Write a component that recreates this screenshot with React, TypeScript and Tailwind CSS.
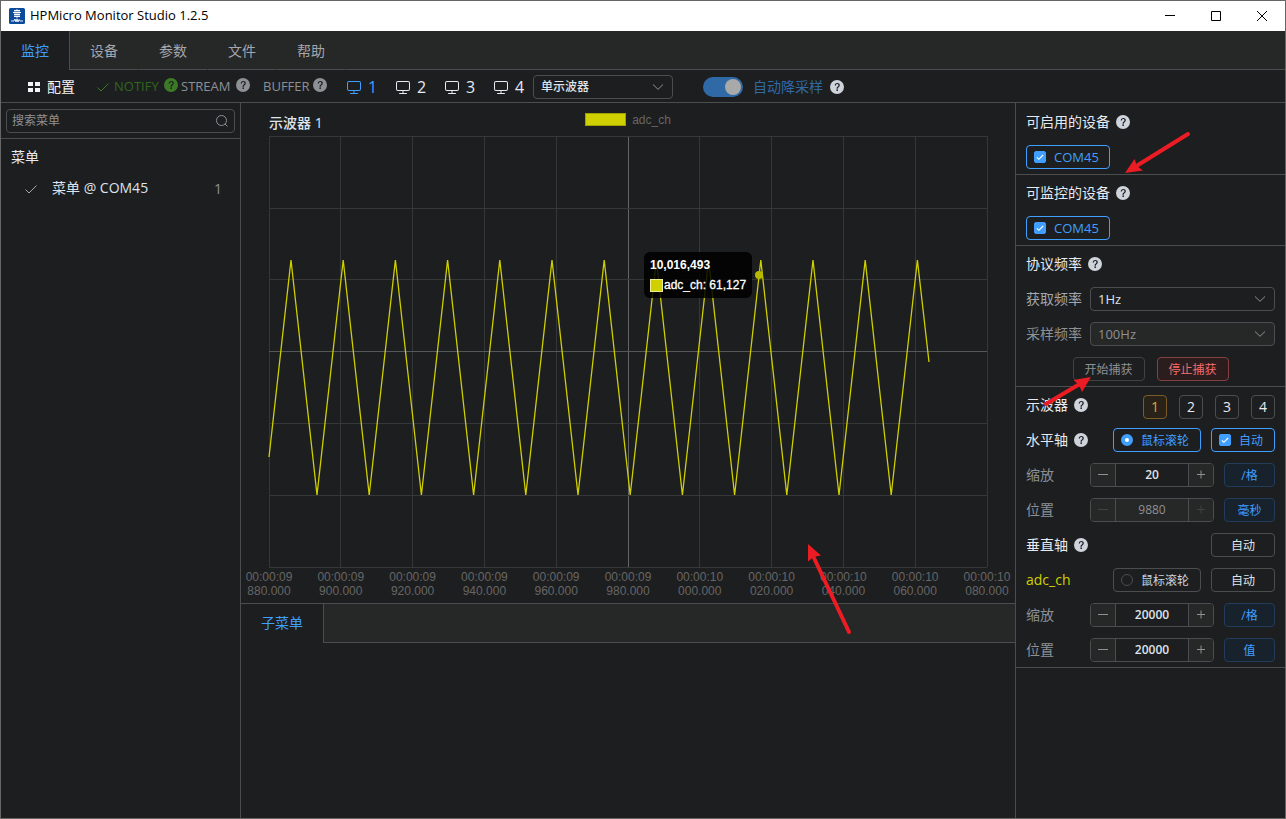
import { useState } from 'react';
import type { ReactNode } from 'react';
import clsx from 'clsx';

const TABS = ['监控', '设备', '参数', '文件', '帮助'];
const SCOPES = [1, 2, 3, 4];

const TICKS = [
  ['00:00:09', '880.000'],
  ['00:00:09', '900.000'],
  ['00:00:09', '920.000'],
  ['00:00:09', '940.000'],
  ['00:00:09', '960.000'],
  ['00:00:09', '980.000'],
  ['00:00:10', '000.000'],
  ['00:00:10', '020.000'],
  ['00:00:10', '040.000'],
  ['00:00:10', '060.000'],
  ['00:00:10', '080.000'],
];

// Triangle wave in plot units (718 x 431)
const WAVE = [
  '0,321',
  ...Array.from({ length: 12 }, (_, i) => `${22 + i * 52.2},124 ${48 + i * 52.2},359`),
  '648.4,124',
  '660,226',
].join(' ');

function HelpIcon({ className = 'text-[#cfd3dc]' }: { className?: string }) {
  return (
    <svg viewBox="0 0 1024 1024" className={clsx('size-4 shrink-0', className)} fill="currentColor" aria-hidden="true">
      <path d="M512 64a448 448 0 1 1 0 896 448 448 0 0 1 0-896m23.744 191.488c-52.096 0-92.928 14.784-123.2 44.352-30.976 29.568-45.76 70.4-45.76 122.496h80.256c0-29.568 5.632-52.8 17.6-68.992 13.376-19.712 35.2-28.864 66.176-28.864 23.936 0 42.944 6.336 56.32 19.712 12.672 13.376 19.712 31.68 19.712 54.912 0 17.6-6.336 34.496-19.008 49.984l-8.448 9.856c-45.76 40.832-73.216 70.4-82.368 89.408-9.856 19.008-14.08 42.24-14.08 68.992v9.856h80.96v-9.856c0-16.896 3.52-31.68 10.56-45.76 6.336-12.672 15.488-24.64 28.16-35.2 33.792-29.568 54.208-48.576 60.544-55.616 16.896-22.528 26.048-51.392 26.048-86.592 0-42.944-14.08-76.736-42.24-101.376-28.16-25.344-65.472-37.312-111.232-37.312zm-12.672 406.208a54.272 54.272 0 0 0-38.72 14.784 49.408 49.408 0 0 0-15.488 38.016c0 15.488 4.928 28.16 15.488 38.016A54.848 54.848 0 0 0 523.072 768c15.488 0 28.16-4.928 38.72-14.784a51.52 51.52 0 0 0 16.192-38.72 51.968 51.968 0 0 0-15.488-38.016 55.936 55.936 0 0 0-39.424-14.784z" />
    </svg>
  );
}

function MonitorIcon() {
  return (
    <svg viewBox="0 0 1024 1024" className="size-4" fill="currentColor" aria-hidden="true">
      <path d="M544 768v128h192a32 32 0 1 1 0 64H288a32 32 0 1 1 0-64h192V768H192A128 128 0 0 1 64 640V256a128 128 0 0 1 128-128h640a128 128 0 0 1 128 128v384a128 128 0 0 1-128 128zM192 192a64 64 0 0 0-64 64v384a64 64 0 0 0 64 64h640a64 64 0 0 0 64-64V256a64 64 0 0 0-64-64z" />
    </svg>
  );
}

function CheckIcon({ className }: { className?: string }) {
  return (
    <svg viewBox="0 0 14 14" className={className} fill="none" stroke="currentColor" aria-hidden="true">
      <path d="M1.5 7.5 5 11 12.5 3.5" />
    </svg>
  );
}

function AppLogo() {
  return (
    <svg viewBox="0 0 16 16" className="size-4" aria-hidden="true">
      <rect width="16" height="16" rx="1.5" fill="#0a4a9b" />
      <g fill="none" stroke="#fff">
        <path d="M5 2.5h6M4 4.5h8M5 6.5h6M5 8.5h6" />
        <path d="M8 1v9.5M6 2v7M10 2v7" strokeWidth="0.8" />
        <path d="M2 13h3l1-2 1 3 1-3 1 3 1-2.500 1 1.500h3" strokeWidth="0.9" />
      </g>
    </svg>
  );
}

interface SelectProps {
  id?: string;
  label?: string;
  value: string;
  disabled?: boolean;
  className?: string;
}

function Select({ id, label, value, disabled, className }: SelectProps) {
  return (
    <div className={clsx('relative', className)}>
      <select
        id={id}
        aria-label={label}
        defaultValue={value}
        disabled={disabled}
        className={clsx(
          'block h-6 w-full appearance-none rounded-sm border border-[#4c4d4f] pr-6 pl-[7px] leading-5',
          disabled ? 'bg-[#262727] text-[#8d9095]' : 'bg-transparent font-medium text-[#dfe3ea]',
        )}
      >
        <option>{value}</option>
      </select>
      <svg viewBox="0 0 14 14" className="pointer-events-none absolute top-[5px] right-2 size-3.5 text-[#8d9095]" fill="none" stroke="currentColor" aria-hidden="true">
        <path d="M2 4.500l5 4.800 5-4.800" />
      </svg>
    </div>
  );
}

function CheckPill({ children, name, className }: { children: ReactNode; name: string; className: string }) {
  return (
    <label className={clsx('flex h-6 items-center rounded-sm border border-[#409eff] px-[7px] leading-5 text-[#409eff]', className)}>
      <span className="relative mr-2 flex size-3">
        <input type="checkbox" name={name} defaultChecked className="peer size-3 appearance-none rounded-[2px] border border-[#409eff] checked:bg-[#409eff]" />
        <CheckIcon className="pointer-events-none absolute top-0.5 left-0.5 hidden size-2 stroke-2 text-white peer-checked:block" />
      </span>
      {children}
    </label>
  );
}

function RadioPill({ id, checked, onChange }: { id: string; checked: boolean; onChange: () => void }) {
  return (
    <label
      htmlFor={id}
      className={clsx(
        'flex h-6 w-[88px] items-center rounded-sm border px-[7px] text-xs',
        checked ? 'border-[#409eff] text-[#409eff]' : 'border-[#4c4d4f] text-[#cfd3dc]',
      )}
    >
      <input
        id={id}
        type="radio"
        name="wheel"
        checked={checked}
        onChange={onChange}
        className="mr-2 size-3 appearance-none rounded-full border border-[#4c4d4f] checked:border-4 checked:border-[#409eff] checked:bg-white"
      />
      <span className="pt-0.5">鼠标滚轮</span>
    </label>
  );
}

function Row({ children, className }: { children: ReactNode; className?: string }) {
  return <div className={clsx('flex h-[35px] items-center', className)}>{children}</div>;
}

function Heading({ children }: { children: ReactNode }) {
  return (
    <h2 className="mr-auto flex items-center gap-[5px] text-sm leading-5 text-[#e5eaf3]">
      {children}
      <HelpIcon />
    </h2>
  );
}

interface StepperProps {
  id: string;
  label: string;
  value: string;
  unit: string;
  disabled?: boolean;
}

function StepperRow({ id, label, value, unit, disabled }: StepperProps) {
  const step = clsx(
    'flex w-6 items-center justify-center bg-[#262727]',
    disabled ? 'text-[#414243]' : 'text-[#8d9095]',
  );
  return (
    <Row>
      <label htmlFor={id} className="w-16 shrink-0 text-sm text-[#8d9095]">{label}</label>
      <div className="flex h-6 min-w-0 flex-1 overflow-hidden rounded-sm border border-[#4c4d4f]">
        <button type="button" aria-label="减少" disabled={disabled} className={step}>
          <svg viewBox="0 0 12 12" className="size-3" stroke="currentColor"><path d="M1 5.500h10" /></svg>
        </button>
        <input
          id={id}
          type="text"
          defaultValue={value}
          disabled={disabled}
          className={clsx(
            'min-w-0 flex-1 border-x border-[#4c4d4f] text-center text-xs',
            disabled ? 'bg-[#262727] text-[#8d9095]' : 'bg-transparent font-semibold text-[#dfe3ea]',
          )}
        />
        <button type="button" aria-label="增加" disabled={disabled} className={step}>
          <svg viewBox="0 0 12 12" className="size-3" stroke="currentColor"><path d="M2 5.500h8M6 1.500v8" /></svg>
        </button>
      </div>
      <button type="button" className="ml-2.5 h-6 w-[51px] rounded-sm border border-[#213d5b] bg-[#18222c] pt-0.5 text-xs text-[#409eff]">
        {unit}
      </button>
    </Row>
  );
}

function Chart() {
  return (
    <section className="px-7 pb-[5px]">
      <div className="grid h-[33px] grid-cols-3">
        <h1 className="pt-2.5 text-sm leading-5 font-medium text-[#dfe3ea]">示波器 1</h1>
        <div className="flex items-center justify-center gap-1.5 font-['Liberation_Sans',sans-serif] text-xs text-[#666]">
          <span className="h-[13px] w-[41px] border border-[#a0a000] bg-[#d0d000]" />
          adc_ch
        </div>
      </div>
      <div className="relative font-['Liberation_Sans',sans-serif] text-xs">
        <svg viewBox="0 0 718 431" preserveAspectRatio="none" className="block h-[431px] w-full overflow-visible" fill="none">
          <g stroke="#363738" shapeRendering="crispEdges">
            {TICKS.map((_, i) => (
              <line key={i} x1={i * 71.8} x2={i * 71.8} y1="0" y2="431" stroke={i === 5 ? '#626364' : undefined} />
            ))}
            {[0, 72, 143, 215, 287, 359, 431].map((y) => (
              <line key={y} x1="0" x2="718" y1={y} y2={y} stroke={y === 215 ? '#565758' : undefined} />
            ))}
          </g>
          <polyline points={WAVE} stroke="#d0d000" strokeWidth="1.3" vectorEffect="non-scaling-stroke" />
          <circle cx="490" cy="139" r="4" fill="#b8b800" />
        </svg>
        <div className="absolute top-[116px] left-[375px] rounded-md bg-black/85 px-1.5 py-[5px] text-white">
          <div className="leading-4 font-bold">10,016,493</div>
          <div className="mt-1 flex items-center leading-4 whitespace-nowrap [-webkit-text-stroke:0.3px_white]">
            <span className="mr-px size-[13px] border border-[#ecec90] bg-[#d0d000]" />
            adc_ch: 61,127
          </div>
        </div>
        <div className="flex justify-between pt-[3px] text-center leading-[14px] text-[#666]">
          {TICKS.map(([time, ms]) => (
            <div key={time + ms} className="flex w-0 justify-center">
              <div>
                <div>{time}</div>
                <div>{ms}</div>
              </div>
            </div>
          ))}
        </div>
      </div>
    </section>
  );
}

function Sidebar() {
  return (
    <aside className="w-60 shrink-0 border-r border-[#4c4d4f]">
      <div className="border-b border-[#4c4d4f] px-[5px] pt-1.5 pb-[5px]">
        <div className="flex h-6 items-center rounded-sm border border-[#4c4d4f] pr-[5px] pl-[5px]">
          <input type="text" aria-label="搜索菜单" placeholder="搜索菜单" className="min-w-0 flex-1 bg-transparent text-xs text-[#cfd3dc] placeholder:text-[#8d9095]" />
          <svg viewBox="0 0 14 14" className="size-3.5 text-[#8d9095]" fill="none" stroke="currentColor" aria-hidden="true">
            <circle cx="6.500" cy="6.500" r="5" />
            <path d="m10 10 2.500 2.500" />
          </svg>
        </div>
      </div>
      <h2 className="mt-2 px-2.5 text-sm leading-5 text-[#e5eaf3]">菜单</h2>
      <a href="#menu" className="mt-2.5 flex h-6 items-center pr-[18px] pl-[23px] text-sm text-[#dfe3ea]">
        <CheckIcon className="mr-3.5 size-3.5 text-[#a3a6ad]" />
        <span className="pb-0.5">菜单 @ COM45</span>
        <span className="ml-auto text-[#8d9095]">1</span>
      </a>
    </aside>
  );
}

function Toolbar() {
  return (
    <div className="flex h-[33px] items-center border-b border-[#4c4d4f] pt-px text-sm">
      <button type="button" className="ml-[27px] flex items-center gap-[7px] text-[#f0f3f8]">
        <svg viewBox="0 0 12 12" className="size-3" fill="currentColor" aria-hidden="true">
          <path d="M0 1h5v4H0zM7 1h5v4H7zM0 7h5v4H0zM7 7h5v4H7z" />
        </svg>
        配置
      </button>
      <span className="ml-[21px] flex items-center text-[13px] text-[#31661d]">
        <CheckIcon className="mr-1 size-3.5 text-[#3d7a27]" />
        <span className="w-[49px]">NOTIFY</span>
        <HelpIcon className="mb-1 text-[#3d7a27]" />
      </span>
      <span className="ml-0.5 flex items-center text-[13px] text-[#8d9095]">
        <span className="w-[54px]">STREAM</span>
        <HelpIcon className="mb-1" />
      </span>
      <span className="ml-3 flex items-center text-[13px] text-[#8d9095]">
        <span className="w-[49px]">BUFFER</span>
        <HelpIcon className="mb-1" />
      </span>
      <div className="ml-[18px] flex text-base">
        {SCOPES.map((n) => (
          <button
            key={n}
            type="button"
            className={clsx('flex w-[49px] items-center gap-1.5', n === 1 ? 'text-[#409eff]' : 'text-[#e5eaf3]')}
          >
            <MonitorIcon />
            {n}
          </button>
        ))}
      </div>
      <Select label="示波器布局" value="单示波器" className="-ml-[9px] w-[140px] text-xs" />
      <label className="ml-[30px] flex items-center gap-2.5 text-[#306aa6]">
        <input
          type="checkbox"
          role="switch"
          defaultChecked
          className="flex h-5 w-10 appearance-none items-center rounded-full bg-[#4c4d4f] px-0.5 before:size-4 before:rounded-full before:bg-[#a9a9a9] checked:justify-end checked:bg-[#306aa6]"
        />
        自动降采样
      </label>
      <HelpIcon className="ml-1.5 text-[#cfd3dc]" />
    </div>
  );
}

function ControlPanel() {
  const [wheel, setWheel] = useState('horizontal');
  const [scope, setScope] = useState(1);
  const section = 'border-b border-[#4c4d4f] px-2.5';
  const plain = 'h-6 w-16 rounded-sm border border-[#4c4d4f] pt-0.5 text-xs text-[#dfe3ea]';

  return (
    <aside className="w-[270px] shrink-0 border-l border-[#4c4d4f] pt-px">
      <div className={section}>
        <Row><Heading>可启用的设备</Heading></Row>
        <Row><CheckPill name="enabled" className="w-[84px] text-[13px]">COM45</CheckPill></Row>
      </div>
      <div className={section}>
        <Row><Heading>可监控的设备</Heading></Row>
        <Row><CheckPill name="monitored" className="w-[84px] text-[13px]">COM45</CheckPill></Row>
      </div>
      <div className={section}>
        <Row><Heading>协议频率</Heading></Row>
        <Row>
          <label htmlFor="fetch-rate" className="w-16 text-sm text-[#a3a6ad]">获取频率</label>
          <Select id="fetch-rate" value="1Hz" className="flex-1 text-[13px]" />
        </Row>
        <Row>
          <label htmlFor="sample-rate" className="w-16 text-sm text-[#8d9095]">采样频率</label>
          <Select id="sample-rate" value="100Hz" disabled className="flex-1 text-[13px]" />
        </Row>
        <Row className="justify-center gap-3 text-xs">
          <button type="button" disabled className="h-6 w-[72px] rounded-sm border border-[#414243] pt-0.5 text-[#8d9095]">开始捕获</button>
          <button type="button" className="h-6 w-[72px] rounded-sm border border-[#854040] bg-[#2b1d1d] pt-0.5 text-[#f56c6c]">停止捕获</button>
        </Row>
      </div>
      <div className={section}>
        <Row>
          <Heading>示波器</Heading>
          <div className="flex gap-3 pt-1">
            {SCOPES.map((n) => (
              <button
                key={n}
                type="button"
                onClick={() => setScope(n)}
                className={clsx(
                  'size-6 rounded-sm border text-sm leading-5',
                  n === scope ? 'border-[#7d5b28] bg-[#292218] text-[#e6a23c]' : 'border-[#4c4d4f] text-[#e5eaf3]',
                )}
              >
                {n}
              </button>
            ))}
          </div>
        </Row>
        <Row className="gap-2.5">
          <Heading>水平轴</Heading>
          <RadioPill id="wheel-h" checked={wheel === 'horizontal'} onChange={() => setWheel('horizontal')} />
          <CheckPill name="auto-h" className="w-16 text-xs"><span className="pt-0.5">自动</span></CheckPill>
        </Row>
        <StepperRow id="h-zoom" label="缩放" value="20" unit="/格" />
        <StepperRow id="h-pos" label="位置" value="9880" unit="毫秒" disabled />
        <Row>
          <Heading>垂直轴</Heading>
          <button type="button" className={plain}>自动</button>
        </Row>
        <Row className="gap-2.5">
          <span className="mr-auto text-sm text-[#d0d000]">adc_ch</span>
          <RadioPill id="wheel-v" checked={wheel === 'vertical'} onChange={() => setWheel('vertical')} />
          <button type="button" className={plain}>自动</button>
        </Row>
        <StepperRow id="v-zoom" label="缩放" value="20000" unit="/格" />
        <StepperRow id="v-pos" label="位置" value="20000" unit="值" />
      </div>
    </aside>
  );
}

// Red pointer arrows drawn over the window
function Arrows() {
  return (
    <svg className="pointer-events-none absolute inset-0 h-full w-full" fill="#ec1c24" stroke="#ec1c24" aria-hidden="true">
      <path d="M1187 133 1137 164" strokeWidth="4" strokeLinecap="round" />
      <path d="M1124 172 1133.500 158 1136 165 1142 169.500Z" stroke="none" />
      <path d="M1045 403 1077 384" strokeWidth="4" strokeLinecap="round" />
      <path d="M1090 376 1072.500 379 1078 384 1081 391Z" stroke="none" />
      <path d="M848 631 813 557" strokeWidth="4" strokeLinecap="round" />
      <path d="M807 543 807 560.500 812.500 556 820 554.500Z" stroke="none" />
    </svg>
  );
}

export default function App() {
  const [tab, setTab] = useState('监控');

  return (
    <div className="relative flex min-h-screen flex-col border border-[#666] bg-[#1d1e1f] font-['Open_Sans','Noto_Sans_CJK_SC',sans-serif]">
      <header className="flex h-[30px] items-center bg-white pl-2 text-black">
        <AppLogo />
        <span className="ml-[5px] text-[13px]">HPMicro Monitor Studio 1.2.5</span>
        <div className="ml-auto flex">
          <button type="button" aria-label="最小化" className="flex h-7 w-[46px] items-center justify-center">
            <svg viewBox="0 0 10 10" className="size-2.5" stroke="currentColor"><path d="M0 4.500h10" /></svg>
          </button>
          <button type="button" aria-label="最大化" className="flex h-7 w-[46px] items-center justify-center">
            <svg viewBox="0 0 10 10" className="size-2.5" fill="none" stroke="currentColor"><path d="M.5.5h9v9h-9z" /></svg>
          </button>
          <button type="button" aria-label="关闭" className="flex h-7 w-[46px] items-center justify-center">
            <svg viewBox="0 0 10 10" className="size-2.5" stroke="currentColor"><path d="m0 0 10 10M10 0 0 10" /></svg>
          </button>
        </div>
      </header>

      <nav className="flex h-[39px] bg-[#262727] text-sm">
        {TABS.map((name) => (
          <button
            key={name}
            type="button"
            onClick={() => setTab(name)}
            className={clsx(
              'border-r px-5 pt-px',
              name === tab
                ? 'border-r-[#4c4d4f] bg-[#1d1e1f] text-[#409eff]'
                : 'border-r-transparent border-b border-b-[#4c4d4f] text-[#a3a6ad]',
            )}
          >
            {name}
          </button>
        ))}
        <div className="flex-1 border-b border-[#4c4d4f]" />
      </nav>

      <Toolbar />

      <div className="flex flex-1">
        <Sidebar />
        <main className="min-w-0 flex-1">
          <Chart />
          <div className="flex h-10 border-t border-[#4c4d4f] bg-[#262727] text-sm">
            <button type="button" className="border-r border-[#4c4d4f] bg-[#1d1e1f] px-5 pb-px text-[#409eff]">子菜单</button>
            <div className="flex-1 border-b border-[#4c4d4f]" />
          </div>
        </main>
        <ControlPanel />
      </div>

      <Arrows />
    </div>
  );
}
